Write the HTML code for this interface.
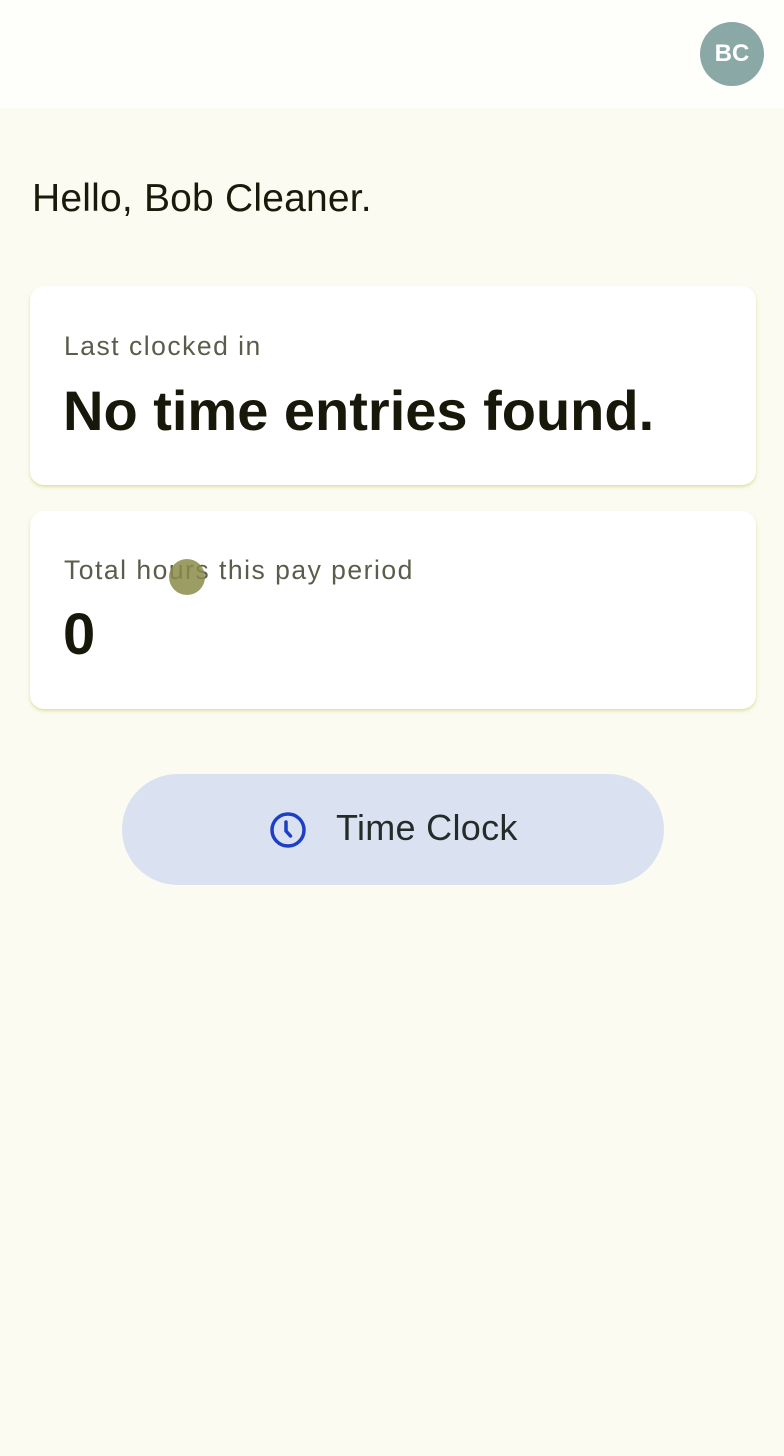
<!DOCTYPE html>
<html><head><meta charset="utf-8"><style>
body{margin:0;width:784px;height:1456px;background:#fbfbf1;font-family:"Liberation Sans",sans-serif;position:relative;overflow:hidden}
.hdr{position:absolute;left:0;top:0;width:784px;height:108px;background:#fefefb}
.av{position:absolute;left:700px;top:22px;width:64px;height:64px;border-radius:50%;background:#8aa8a6;color:#fff;font-weight:bold;font-size:24px;line-height:64px;text-align:center}
.hello{position:absolute;left:32px;top:177px;font-size:39px;color:#1a1a0a;letter-spacing:.2px}
.card{position:absolute;left:30px;width:726px;background:#fff;border-radius:14px;box-shadow:0 2px 3px rgba(200,200,90,.5)}
.lbl{position:absolute;left:34px;font-size:26.5px;color:#5c5c4c;letter-spacing:1.5px}
.big{position:absolute;left:33px;font-weight:bold;color:#18180a}
.btn{position:absolute;left:122px;top:774px;width:542px;height:111px;border-radius:56px;background:#dae2f2}
.btn span{position:absolute;left:214px;top:33px;font-size:36px;color:#232c28;letter-spacing:.3px}
</style></head><body>
<div class="hdr"></div>
<div class="av">BC</div>
<div class="hello">Hello, Bob Cleaner.</div>
<div class="card" style="top:286px;height:199px">
<div class="lbl" style="top:45px">Last clocked in</div>
<div class="big" style="top:92px;font-size:56px">No time entries found.</div>
</div>
<div class="card" style="top:511px;height:198px">
<div class="lbl" style="top:44px">Total hours this pay period</div>
<div class="big" style="top:90px;font-size:58px">0</div>
</div>
<div style="position:absolute;left:169px;top:559px;width:36px;height:36px;border-radius:50%;background:#8b8b4a;opacity:.85"></div>
<div class="btn">
<svg style="position:absolute;left:146px;top:36px" width="40" height="40" viewBox="0 0 40 40"><circle cx="20" cy="20" r="16" fill="none" stroke="#1c3fc4" stroke-width="3.5"/><path d="M18 12v9l4.5 5" fill="none" stroke="#1c3fc4" stroke-width="3.5" stroke-linecap="round"/></svg>
<span>Time Clock</span></div>
</body></html>
